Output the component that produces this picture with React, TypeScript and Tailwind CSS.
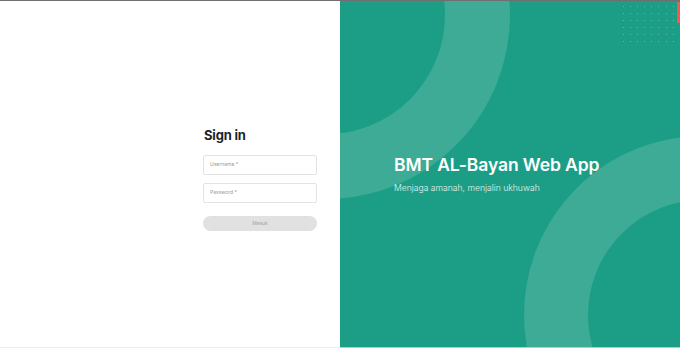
export default function App() {
  const dots = Array.from({ length: 48 });

  return (
    <div className="w-[680px] h-[348px] flex flex-col bg-white overflow-hidden font-['Inter',sans-serif]">
      <div className="h-px bg-[#6f6f6f]" />
      <div className="flex flex-1">
        {/* Left: sign in form */}
        <div className="w-[340px] flex items-center pl-[203px] pt-[12px]">
          <div className="w-[114px] flex flex-col">
            <h1 className="text-[13px] font-bold text-[#1f2328] leading-none tracking-[-0.2px] pl-px">Sign in</h1>
            <div className="mt-[13px] h-[20px] border border-[#e3e3e3] rounded-[2px] flex items-center px-[6px]">
              <span className="text-[5px] text-[#9a9a9a]">Username *</span>
            </div>
            <div className="mt-[8px] h-[20px] border border-[#e3e3e3] rounded-[2px] flex items-center px-[6px]">
              <span className="text-[5px] text-[#9a9a9a]">Password *</span>
            </div>
            <button className="mt-[13px] h-[15px] rounded-full bg-[#e1e1e1] flex items-center justify-center">
              <span className="text-[5px] text-[#a3a3a3]">Masuk</span>
            </button>
          </div>
        </div>

        {/* Right: brand panel */}
        <div className="relative flex-1 bg-[#1c9e86] overflow-hidden">
          <div className="absolute left-[-198px] top-[-170px] w-[368px] h-[368px] rounded-full border-[65px] border-[#3dab95]" />
          <div className="absolute left-[184px] top-[135px] w-[358px] h-[358px] rounded-full border-[64px] border-[#3dab95]" />

          <div className="absolute left-[283px] top-[5px] grid grid-cols-8 gap-x-[6.1px] gap-y-[6.1px]">
            {dots.map((_, i) => (
              <span key={i} className="w-px h-px bg-[#5dbba8]" />
            ))}
          </div>
          <div className="absolute right-0 top-[1px] w-[3px] h-[21px] bg-[#ef5b4c]" />

          <div className="relative flex flex-col pl-[54px] pt-[155px]">
            <h2 className="text-[17.5px] font-semibold text-white leading-none tracking-[-0.1px]">BMT AL-Bayan Web App</h2>
            <p className="mt-[10px] text-[8.6px] font-light text-[#e2f3ef] leading-none">Menjaga amanah, menjalin ukhuwah</p>
          </div>
        </div>
      </div>
      <div className="h-px flex">
        <div className="w-[340px] bg-[#ececec]" />
        <div className="flex-1 bg-[#9ed6ca]" />
      </div>
    </div>
  );
}
